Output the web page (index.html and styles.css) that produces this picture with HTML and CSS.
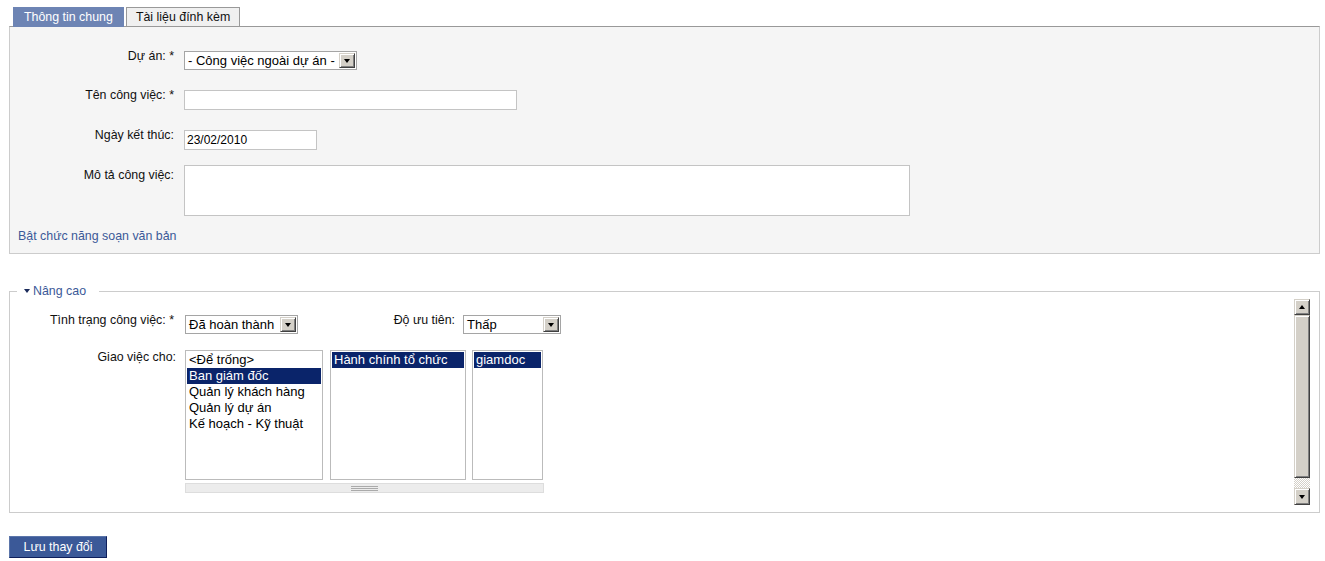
FILE: index.html
```html
<!DOCTYPE html>
<html lang="vi">
<head>
<meta charset="UTF-8">
<title>Công việc</title>
<link rel="stylesheet" href="styles.css">
</head>
<body>

<div class="tabs">
    <span class="tab tab-active">Thông tin chung</span>
    <span class="tab">Tài liệu đính kèm</span>
</div>

<div class="panel">
    <div class="row row-project">
        <label class="lbl">Dự án: *</label>
        <span class="combo combo-project">
            <span class="combo-text">- Công việc ngoài dự án -</span>
            <span class="combo-btn"><i class="tri-down"></i></span>
        </span>
    </div>
    <div class="row row-name">
        <label class="lbl">Tên công việc: *</label>
        <input class="txt txt-name" type="text">
    </div>
    <div class="row row-date">
        <label class="lbl">Ngày kết thúc:</label>
        <input class="txt txt-date" type="text" value="23/02/2010">
    </div>
    <div class="row row-desc">
        <label class="lbl lbl-desc">Mô tả công việc:</label>
        <textarea class="txt-area"></textarea>
    </div>
    <a class="editor-link" href="#">Bật chức năng soạn văn bản</a>
</div>

<fieldset class="advanced">
    <legend><i class="tri-legend"></i>Nâng cao</legend>
    <div class="adv-wrap">
        <div class="adv-body">
            <div class="adv-row">
                <label class="lbl">Tình trạng công việc: *</label>
                <span class="combo combo-status">
                    <span class="combo-text">Đã hoàn thành</span>
                    <span class="combo-btn"><i class="tri-down"></i></span>
                </span>
                <label class="lbl lbl-priority">Độ ưu tiên:</label>
                <span class="combo combo-priority">
                    <span class="combo-text">Thấp</span>
                    <span class="combo-btn"><i class="tri-down"></i></span>
                </span>
            </div>
            <div class="adv-row adv-assign">
                <label class="lbl lbl-assign">Giao việc cho:</label>
                <div class="assign">
                    <div class="lists">
                        <div class="listbox list-dept">
                            <div class="opt">&lt;Để trống&gt;</div>
                            <div class="opt selected">Ban giám đốc</div>
                            <div class="opt">Quản lý khách hàng</div>
                            <div class="opt">Quản lý dự án</div>
                            <div class="opt">Kế hoạch - Kỹ thuật</div>
                        </div>
                        <div class="listbox list-group">
                            <div class="opt selected">Hành chính tổ chức</div>
                        </div>
                        <div class="listbox list-user">
                            <div class="opt selected">giamdoc</div>
                        </div>
                    </div>
                    <div class="hscroll"><span class="grip"></span></div>
                </div>
            </div>
        </div>
        <div class="vscroll">
            <span class="sb-btn"><i class="tri-up"></i></span>
            <span class="sb-thumb"></span>
            <span class="sb-track"></span>
            <span class="sb-btn sb-btn-down"><i class="tri-down"></i></span>
        </div>
    </div>
</fieldset>

<button class="save-btn" type="button">Lưu thay đổi</button>

</body>
</html>
```

FILE: styles.css
```css
body {
    margin: 0;
    padding: 7px 5px 0 9px;
    font-family: "Liberation Sans", Arial, sans-serif;
    font-size: 12.4px;
    color: #222;
    background: #fff;
}

/* tabs */
.tabs {
    display: flex;
    gap: 2px;
    padding-left: 4px;
    margin-bottom: -1px;
}

.tab {
    display: block;
    height: 18px;
    line-height: 18px;
    padding: 0 9px;
    border: 1px solid #999;
    background: #f0f0f0;
    color: #111;
}

.tab-active {
    padding: 0 10px;
    background: #6d84b4;
    border-color: #6d84b4;
    color: #fff;
}

/* main panel */
.panel {
    background: #f5f5f5;
    border: 1px solid #ccc;
    border-top-color: #999;
    padding: 24px 0 9px 0;
}

.row {
    display: flex;
    align-items: flex-start;
}

.row-name { margin-top: 20px; }
.row-date { margin-top: 20px; }
.row-desc { margin-top: 15px; }

.lbl {
    display: block;
    width: 164px;
    flex-shrink: 0;
    text-align: right;
    line-height: 15px;
    margin-top: -2px;
    margin-right: 10px;
    color: #111;
}

.lbl-desc { margin-top: 3px; }

.txt {
    box-sizing: border-box;
    height: 20px;
    border: 1px solid #c4c4c4;
    background: #fff;
    margin: 0;
    padding: 0 2px;
    font-family: "Liberation Sans", Arial, sans-serif;
    font-size: 12px;
    color: #000;
}

.txt-name { width: 333px; }
.txt-date { width: 133px; }

.txt-area {
    box-sizing: border-box;
    width: 726px;
    height: 51px;
    margin: 0;
    border: 1px solid #c4c4c4;
    background: #fff;
    resize: none;
}

.editor-link {
    display: block;
    margin: 13px 0 0 8px;
    line-height: 15px;
    color: #3b5998;
    text-decoration: none;
}

/* combo boxes */
.combo {
    box-sizing: border-box;
    display: flex;
    align-items: center;
    height: 19px;
    border: 1px solid #a5a5a5;
    background: #fff;
    padding: 1px;
    font-size: 13px;
    color: #000;
}

.combo-text {
    flex: 1;
    padding-left: 2px;
    white-space: nowrap;
    line-height: 15px;
}

.combo-btn {
    box-sizing: border-box;
    width: 16px;
    height: 15px;
    display: flex;
    align-items: center;
    justify-content: center;
    background: #d4d0c8;
    border: 1px solid;
    border-color: #d4d0c8 #404040 #404040 #d4d0c8;
    box-shadow: inset 1px 1px #fff, inset -1px -1px #808080;
}

.combo-project { width: 173px; }
.combo-status { width: 113px; }
.combo-priority { width: 98px; }

.tri-down, .tri-up {
    display: block;
    width: 0;
    height: 0;
    border-left: 3.5px solid transparent;
    border-right: 3.5px solid transparent;
}

.tri-down { border-top: 4px solid #000; }
.tri-up { border-bottom: 4px solid #000; }

/* advanced fieldset */
.advanced {
    margin: 30px 0 0 0;
    padding: 0 9px 7px 0;
    border: 1px solid #ccc;
    min-width: 0;
}

.advanced legend {
    margin-left: 7px;
    padding: 0 13px 0 7px;
    line-height: 15px;
    color: #3b5998;
}

.tri-legend {
    display: inline-block;
    width: 0;
    height: 0;
    border-left: 3.5px solid transparent;
    border-right: 3.5px solid transparent;
    border-top: 4px solid #1a2a5a;
    margin-right: 3px;
    vertical-align: 2px;
}

.adv-wrap {
    display: flex;
}

.adv-body {
    flex: 1;
    padding: 16px 0 12px 0;
}

.adv-row {
    display: flex;
    align-items: flex-start;
}

.adv-row .lbl { margin-right: 11px; }

.adv-row .lbl-priority {
    width: 157px;
    margin-right: 8px;
}

.adv-assign { margin-top: 16px; }

.adv-row .lbl-assign {
    margin-top: 0;
    width: 166px;
    margin-right: 9px;
}

.lists {
    display: flex;
    gap: 7px;
}

.listbox {
    box-sizing: border-box;
    height: 130px;
    border: 1px solid #bbb;
    background: #fff;
    padding: 1px;
    font-size: 13px;
    line-height: 16px;
    color: #000;
}

.list-dept { width: 138px; }
.list-group { width: 136px; margin-right: -1px; }
.list-user { width: 71px; }

.opt {
    padding-left: 2px;
    white-space: nowrap;
}

.opt.selected {
    background: #0a246a;
    color: #fff;
}

.hscroll {
    box-sizing: border-box;
    width: 359px;
    height: 10px;
    margin-top: 3px;
    background: #ececec;
    border: 1px solid #ddd;
    display: flex;
    align-items: center;
    justify-content: center;
}

.grip {
    display: block;
    width: 27px;
    height: 5px;
    background: repeating-linear-gradient(#aaa 0 1px, transparent 1px 2px);
}

/* vertical scrollbar */
.vscroll {
    width: 16px;
    display: flex;
    flex-direction: column;
}

.sb-btn {
    box-sizing: border-box;
    height: 16px;
    display: flex;
    align-items: center;
    justify-content: center;
    background: #d4d0c8;
    border: 1px solid;
    border-color: #d4d0c8 #404040 #404040 #d4d0c8;
    box-shadow: inset 1px 1px #fff, inset -1px -1px #808080;
}

.sb-btn-down { height: 17px; }

.sb-thumb {
    box-sizing: border-box;
    height: 163px;
    background: #d4d0c8;
    border: 1px solid;
    border-color: #d4d0c8 #404040 #404040 #d4d0c8;
    box-shadow: inset 1px 1px #fff, inset -1px -1px #808080;
}

.sb-track {
    flex: 1;
    background: repeating-conic-gradient(#d4d0c8 0 25%, #fff 0 50%) 0 0 / 2px 2px;
}

/* save */
.save-btn {
    display: block;
    margin-top: 23px;
    width: 98px;
    height: 22px;
    padding: 0;
    background: #3b5998;
    border: 1px solid;
    border-color: #5b75aa #0e1f5b #0e1f5b #5b75aa;
    color: #fff;
    font-family: "Liberation Sans", Arial, sans-serif;
    font-size: 12.4px;
}
```
